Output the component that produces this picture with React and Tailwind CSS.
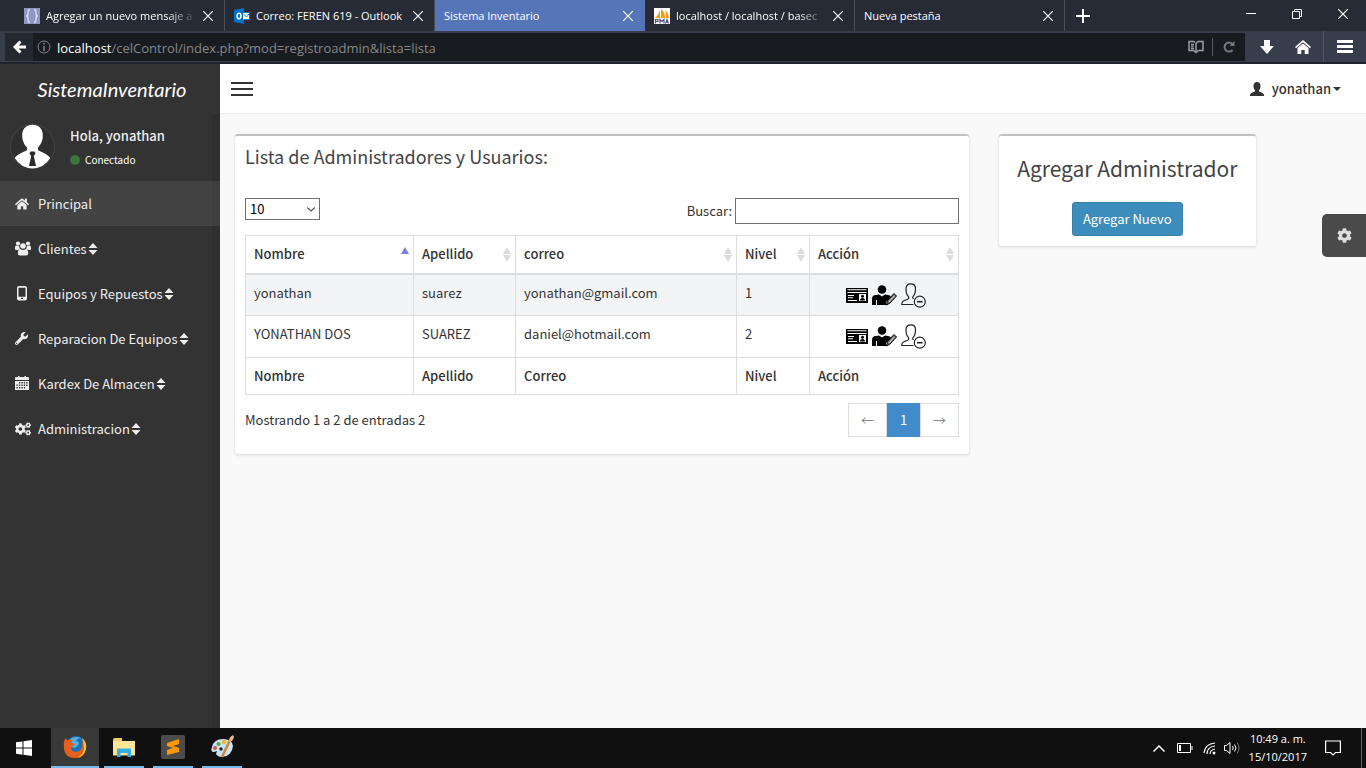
import React, { useState } from "react";
import { FaCogs, FaCog, FaHome, FaWrench } from "react-icons/fa";

const tabs = [
  { title: "Agregar un nuevo mensaje a", icon: "braces", fade: true },
  { title: "Correo: FEREN 619 - Outlook", icon: "outlook" },
  { title: "Sistema Inventario", active: true },
  { title: "localhost / localhost / basec", icon: "pma", fade: true },
  { title: "Nueva pestaña" },
];

const users = [
  { name: "yonathan", last: "suarez", mail: "yonathan@gmail.com", level: 1 },
  { name: "YONATHAN DOS", last: "SUAREZ", mail: "daniel@hotmail.com", level: 2 },
];

const UsersIcon = () => (
  <svg width="16" height="15" viewBox="0 0 16 15" className="fill-current">
    <circle cx="3" cy="2.600" r="2.100" />
    <circle cx="13" cy="2.600" r="2.100" />
    <path d="M0 8V6.500Q0 4.300 1.500 4.500q1.500.9 2.700.3Q4 7 5 7.700 3.800 8 3.300 9H1Q0 9 0 8zM16 8V6.500q0-2.200-1.500-2-1.500.9-2.700.3.200 2.200-.8 2.900 1.200.3 1.700 1.300H15q1 0 1-1z" />
    <circle cx="8" cy="5" r="2.800" />
    <path d="M2.800 12.500q0-4.500 2.500-4.500Q8 9.800 10.700 8q2.500 0 2.500 4.500 0 1.900-2 1.900H4.800q-2 0-2-1.900z" />
  </svg>
);

const PhoneIcon = () => (
  <svg width="14" height="15" viewBox="0 0 14 15" className="fill-current">
    <path
      fillRule="evenodd"
      d="M4 0h6a2 2 0 0 1 2 2v10.500a2 2 0 0 1-2 2H4a2 2 0 0 1-2-2V2a2 2 0 0 1 2-2zM3.500 1.800v8.900h7V1.800zM6 11.800v1.300h2v-1.300z"
    />
  </svg>
);

const CalendarIcon = () => (
  <svg width="14" height="15" viewBox="0 0 14 15" className="fill-current">
    <path d="M1 1h2V0h1.500v1h5V0H11v1h2a1 1 0 0 1 1 1v2H0V2a1 1 0 0 1 1-1z" />
    <path
      fillRule="evenodd"
      d="M0 5h14v8.500a.5.5 0 0 1-.5.5H.5a.5.5 0 0 1-.5-.5zM4 6v1.500h1.300V6zm2.400 0v1.500h1.300V6zm2.400 0v1.500h1.300V6zm2.400 0v1.500h1.300V6zM1.500 8.500V10h1.300V8.500zm2.500 0V10h1.300V8.500zm2.400 0V10h1.300V8.500zm2.400 0V10h1.300V8.500zm2.400 0V10h1.300V8.500zM1.500 11v1.500h1.300V11zM4 11v1.500h1.300V11zm2.400 0v1.500h1.300V11zm2.400 0v1.500h1.300V11z"
    />
  </svg>
);

const menu = [
  { label: "Principal", icon: <FaHome size={14} />, active: true },
  { label: "Clientes", icon: <UsersIcon />, sub: true },
  { label: "Equipos y Repuestos", icon: <PhoneIcon />, sub: true },
  { label: "Reparacion De Equipos", icon: <FaWrench size={13} />, sub: true },
  { label: "Kardex De Almacen", icon: <CalendarIcon />, sub: true },
  { label: "Administracion", icon: <FaCogs size={16} />, sub: true },
];

const Favicon = ({ name }) => {
  if (name === "braces")
    return (
      <svg width="16" height="16" viewBox="0 0 16 16" className="shrink-0">
        <path fill="#8d97c2" d="M0 0h16v16H0z" />
        <path
          fill="none"
          stroke="#dfe3f3"
          strokeWidth="1.300"
          d="M6 2H5Q4 2 4 3.500V6Q4 8 2 8q2 0 2 2v2.500Q4 14 5 14h1M10 2h1q1 0 1 1.500V6q0 2 2 2-2 0-2 2v2.500q0 1.500-1 1.500h-1"
        />
      </svg>
    );
  if (name === "outlook")
    return (
      <svg width="16" height="16" viewBox="0 0 16 16" className="shrink-0">
        <path fill="#0072c6" d="M0 2 10 0v16L0 14z" />
        <path fill="#fff" d="M9 5h6v7H9z" />
        <path fill="none" stroke="#0072c6" d="M9.500 4.500h6v7h-6M9.500 6l3 3 3-3.500" />
        <ellipse cx="5" cy="8" rx="2" ry="2.700" fill="none" stroke="#fff" strokeWidth="1.500" />
      </svg>
    );
  return (
    <svg width="16" height="16" viewBox="0 0 16 16" className="shrink-0">
      <path fill="#fff" d="M0 0h16v16H0z" />
      <path fill="#f89c0e" d="M6 1v9H1Q5 7 6 1zM7 1q4 3 4 9H7zM11 2q4 4 4 8h-3q0-5-1-8z" />
      <path
        fill="none"
        stroke="#53507e"
        strokeWidth="1.200"
        d="M1.500 15.500v-4h2.500v2H2M6 15.500v-4l2 2 2-2v4M11.500 15.500l1.500-4 1.500 4M12 14.200h2"
      />
    </svg>
  );
};

const Cross = () => (
  <svg width="10" height="10" viewBox="0 0 10 10" stroke="currentColor" strokeWidth="1.200">
    <path d="M0 0l10 10M10 0 0 10" />
  </svg>
);

const Browser = () => (
  <header className="shrink-0 text-white font-['Open_Sans',sans-serif]">
    <div className="flex h-[31px] items-stretch bg-[#272b35] pl-[15px]">
      {tabs.map((tab) => (
        <div
          key={tab.title}
          className={`flex w-[210px] min-w-0 items-center gap-1.5 border-r pl-[9px] pr-[11px] ${
            tab.active ? "border-[#5675b9] bg-[#5675b9]" : "border-[#4b4f5a]"
          }`}
        >
          {tab.icon && <Favicon name={tab.icon} />}
          <span
            className={`min-w-0 flex-1 overflow-hidden whitespace-nowrap text-[11px] ${
              tab.fade ? "[mask-image:linear-gradient(to_right,black_80%,transparent)]" : ""
            }`}
          >
            {tab.title}
          </span>
          <button aria-label="Cerrar pestaña">
            <Cross />
          </button>
        </div>
      ))}
      <button aria-label="Abrir pestaña" className="px-[11px]">
        <svg width="14" height="14" viewBox="0 0 14 14" stroke="#fff" strokeWidth="2">
          <path d="M7 0v14M0 7h14" />
        </svg>
      </button>
      <div className="ml-auto flex items-center gap-9 pb-1 pr-[18px]">
        <button aria-label="Minimizar">
          <svg width="10" height="10" viewBox="0 0 10 10" stroke="#fff">
            <path d="M0 4.500h10" />
          </svg>
        </button>
        <button aria-label="Restaurar">
          <svg width="10" height="10" viewBox="0 0 10 10" stroke="#fff" fill="none">
            <path d="M.5 2.500h7v7h-7zM2.500 2.500v-2h7v7h-2" />
          </svg>
        </button>
        <button aria-label="Cerrar">
          <Cross />
        </button>
      </div>
    </div>
    <div className="flex h-[33px] items-center border-b-2 border-[#20242e] bg-[#383d4b] pl-[5px]">
      <div className="flex h-7 flex-1 items-center bg-[#181b1f]">
        <button aria-label="Atrás" className="flex h-7 w-7 items-center justify-center bg-[#242830]">
          <svg width="13" height="14" viewBox="0 0 13 14" fill="none" stroke="#fff" strokeWidth="3">
            <path d="M7.500 1.500 2 7l5.500 5.500M2 7h11" />
          </svg>
        </button>
        <svg width="14" height="14" viewBox="0 0 14 14" fill="none" stroke="#85888c" className="ml-1">
          <circle cx="7" cy="7" r="6" />
          <path d="M7 3v1.500M7 6v5" strokeWidth="1.500" />
        </svg>
        <span className="ml-1.5 flex-1 whitespace-nowrap pt-0.5 text-[13px] text-[#85888c]">
          <span className="text-white">localhost</span>
          /celControl/index.php?mod=registroadmin&amp;lista=lista
        </span>
        <button aria-label="Vista de lectura" className="border-r border-[#55585d] py-0.5 pr-2">
          <svg width="16" height="14" viewBox="0 0 16 14" fill="none" stroke="#9a9c9f" strokeWidth="1.500">
            <path d="M7 2.500 6 1.500H1v9h4.500L8 12.500l2.500-2H15v-9h-5l-2 2V12M3 4.500h3M3 6.500h2.500M3 8.500h3" />
          </svg>
        </button>
        <button aria-label="Recargar" className="px-2.5">
          <svg width="12" height="12" viewBox="0 0 12 12" fill="none" stroke="#77797d" strokeWidth="2">
            <path d="M9.500 9A4.500 4.500 0 1 1 9.300 3" />
            <path d="M11.500 0v5h-5z" fill="#77797d" stroke="none" />
          </svg>
        </button>
      </div>
      <button aria-label="Descargas" className="px-[15px]">
        <svg width="14" height="14" viewBox="0 0 14 14" fill="#fff">
          <path d="M4 0h6v6h4l-7 8-7-8h4z" />
        </svg>
      </button>
      <button aria-label="Inicio" className="mr-3 pl-1.5">
        <svg width="16" height="14" viewBox="0 0 16 14" fill="#fff">
          <path d="M8 0l8 7-1 1.200L8 2.300 1 8.200 0 7z" />
          <path d="M8 3.500l5.500 4.600V14H9.700v-4H6.300v4H2.500V8.100z" />
        </svg>
      </button>
      <button aria-label="Menú" className="flex h-[31px] items-center border-l border-[#555966] px-[13px]">
        <svg width="16" height="13" viewBox="0 0 16 13" stroke="#fff" strokeWidth="3">
          <path d="M0 1.500h16M0 6.500h16M0 11.500h16" />
        </svg>
      </button>
    </div>
  </header>
);

const Avatar = () => (
  <svg width="45" height="45" viewBox="0 0 45 45" className="shrink-0">
    <circle cx="22.500" cy="22.500" r="22" fill="#2f2f2f" stroke="#444" />
    <path
      fill="#fff"
      d="M22.500.8c6 0 10.300 4 10.300 10.500 0 6.500-2.500 9.500-4.800 12.400v2.200c4 2.700 9 3.300 12.300 8.200A22 22 0 0 1 22.500 44.500 22 22 0 0 1 4.700 34.100C8 29.200 13 28.600 17 25.900v-2.200c-2.300-2.900-4.800-5.900-4.800-12.400C12.200 4.800 16.500.8 22.500.8z"
    />
    <path fill="#2b2b2b" d="M20.500 27.500h4l1 2-1.700 2.500L26 42h-7l2.200-10-1.700-2.500z" />
  </svg>
);

const Sidebar = () => (
  <aside className="flex w-[220px] shrink-0 flex-col bg-[#333] text-[13px] text-[#eee]">
    <a
      href="#inicio"
      className="flex h-[50px] items-center justify-center pl-1 font-['Lato',cursive] text-[20px] italic text-white"
    >
      SistemaInventario
    </a>
    <div className="flex-1 shadow-[inset_-8px_0_0_#2f2f2f]">
      <div className="flex h-[67px] gap-[15px] p-2.5">
        <Avatar />
        <div className="pt-0.5">
          <p className="font-medium leading-5">Hola, yonathan</p>
          <p className="mt-1 flex items-center gap-[5px] text-[10px] leading-5 text-white">
            <span className="h-2.5 w-2.5 rounded-full bg-[#3c763d]" />
            Conectado
          </p>
        </div>
      </div>
      <nav>
        {menu.map((item) => (
          <a
            key={item.label}
            href="#menu"
            className={`flex h-[45px] items-center pl-[15px] ${item.active ? "bg-white/8" : ""}`}
          >
            <span className="w-[23px]">{item.icon}</span>
            {item.label}
            {item.sub && (
              <svg width="10" height="12" viewBox="0 0 10 12" className="ml-px fill-current">
                <path d="M.5 5 5 0l4.500 5zM.5 7h9L5 12z" />
              </svg>
            )}
          </a>
        ))}
      </nav>
    </div>
  </aside>
);

const SortArrows = ({ sorted }) => (
  <svg width="8" height="15" viewBox="0 0 8 15" className="shrink-0">
    <path d="M0 7l4-7 4 7z" fill={sorted ? "#7a80dd" : "#dcdcdc"} />
    {!sorted && <path d="M0 8h8l-4 7z" fill="#dcdcdc" />}
  </svg>
);

const HeadCell = ({ width, sorted, children }) => (
  <th className={`border border-b-2 border-[#ddd] pl-2 pr-1 font-medium ${width}`}>
    <div className="flex items-center justify-between">
      {children} <SortArrows sorted={sorted} />
    </div>
  </th>
);

const Actions = () => (
  <div className="flex items-center justify-center gap-1 pl-1">
    <button aria-label="Ver">
      <svg width="22" height="15" viewBox="0 0 22 15">
        <path d="M0 0h22v15H0z" />
        <path fill="#fff" d="M1.500 1.300h19v1h-19zM1.500 4h19v1h-19zM2 7h6v1H2zM2 9.300h5v1H2zM2 12h9v1H2zM13 6h7v7h-7z" />
        <circle cx="16.500" cy="8.300" r="1.500" />
        <path d="M14 12.500q0-2.500 2.500-2.500t2.500 2.500z" />
      </svg>
    </button>
    <button aria-label="Editar">
      <svg width="25" height="21" viewBox="0 0 25 21">
        <circle cx="10" cy="4.500" r="4.300" />
        <path d="M0 20v-6q0-4 4-4l3-.5 3 2 3-2 3 .5q2 0 3 1.500L14 17v3H5v-5H4v5z" />
        <path fill="#777" stroke="#000" d="M14.500 20l1-4.500 6.500-7 2.500 2.500-6.500 7z" />
        <path stroke="#fff" strokeWidth=".8" d="M17 17l5.500-6" />
      </svg>
    </button>
    <button aria-label="Eliminar">
      <svg width="25" height="25" viewBox="0 0 25 25" fill="none" stroke="#222" strokeWidth="1.200">
        <path d="M12.500 21.500H.8c0-4 2.500-3.800 6-5.300 1.300-.6 1.200-2 .3-3C5 11 5 8.500 5 5.500 5 2.500 7 .8 9.700.8s4.800 1.700 4.800 4.700c0 3 0 5.500-2.200 7.700-.8.900-.8 2 .3 2.600" />
        <circle cx="18.800" cy="18.700" r="5.500" />
        <path d="M16 18.700h5.600" strokeWidth="1.600" />
      </svg>
    </button>
  </div>
);

const UserList = () => {
  const [search, setSearch] = useState("");
  const cell = "border border-[#ddd] px-2 pt-2 align-top";
  const rows = users.filter((u) =>
    Object.values(u).join(" ").toLowerCase().includes(search.toLowerCase())
  );

  return (
    <section className="rounded-[3px] border-t-2 border-[#c1c1c1] bg-white px-2.5 pb-[17px] shadow-[0_1px_3px_rgba(0,0,0,0.15)]">
      <h3 className="pt-1.5 text-[18px] leading-7 text-[#444]">
        Lista de Administradores y Usuarios:
      </h3>
      <div className="mt-7 flex items-start justify-between">
        <div className="relative">
          <select
            aria-label="Entradas"
            className="h-[22px] w-[75px] appearance-none border border-[#707070] bg-white pl-1 leading-5 text-black"
          >
            <option>10</option>
            <option>25</option>
          </select>
          <svg
            width="8"
            height="5"
            viewBox="0 0 8 5"
            fill="none"
            stroke="#555"
            strokeWidth="1.300"
            className="pointer-events-none absolute right-[5px] top-[9px]"
          >
            <path d="M0 .5l4 3.500 4-3.500" />
          </svg>
        </div>
        <label className="flex items-center gap-[3px]">
          Buscar:
          <input
            className="h-[26px] w-56 border border-[#707070] px-1"
            value={search}
            onChange={(e) => setSearch(e.target.value)}
          />
        </label>
      </div>

      <table className="mt-[11px] w-full table-fixed border-collapse text-left">
        <thead>
          <tr className="h-[38px]">
            <HeadCell width="w-[168px]" sorted>
              Nombre
            </HeadCell>
            <HeadCell width="w-[102px]">Apellido</HeadCell>
            <HeadCell>correo</HeadCell>
            <HeadCell width="w-[73px]">Nivel</HeadCell>
            <HeadCell width="w-[149px]">Acción</HeadCell>
          </tr>
        </thead>
        <tbody>
          {rows.map((user) => (
            <tr key={user.name} className="h-[42px] odd:bg-[#f3f4f5]">
              <td className={cell}>{user.name}</td>
              <td className={cell}>{user.last}</td>
              <td className={cell}>{user.mail}</td>
              <td className={cell}>{user.level}</td>
              <td className={cell}>
                <Actions />
              </td>
            </tr>
          ))}
        </tbody>
        <tfoot>
          <tr className="h-[37px]">
            {["Nombre", "Apellido", "Correo", "Nivel", "Acción"].map((name) => (
              <th key={name} className="border border-[#ddd] px-2 font-medium">
                {name}
              </th>
            ))}
          </tr>
        </tfoot>
      </table>

      <div className="mt-2 flex items-center justify-between">
        <p>Mostrando 1 a 2 de entradas 2</p>
        <div className="flex h-[34px] items-stretch">
          <button aria-label="Anterior" className="w-[39px] border border-[#ddd] text-[#888]">
            ←
          </button>
          <button className="w-[33px] bg-[#428bca] text-white">1</button>
          <button aria-label="Siguiente" className="w-[39px] border border-[#ddd] text-[#888]">
            →
          </button>
        </div>
      </div>
    </section>
  );
};

const TaskButton = ({ label, active, children }) => (
  <button
    aria-label={label}
    className={`flex items-center justify-center border-b-2 border-[#76b9ed] ${
      active ? "w-12 bg-[#383838]" : "w-10"
    }`}
  >
    {children}
  </button>
);

const Taskbar = () => (
  <footer className="flex h-10 shrink-0 items-stretch bg-[#101010] font-['Open_Sans',sans-serif] text-white">
    <button aria-label="Inicio" className="pl-4 pr-[19px]">
      <svg width="16" height="16" viewBox="0 0 16 16" fill="#fff">
        <path d="M0 2.300 6.500 1.400v6.200H0zM7.500 1.200 16 0v7.600H7.500zM0 8.500h6.500v6.200L0 13.800zM7.500 8.500H16V16l-8.500-1.200z" />
      </svg>
    </button>
    <div className="flex flex-1 gap-[9px]">
      <div className="-mr-1 flex">
        <TaskButton label="Firefox" active>
          <svg width="24" height="24" viewBox="0 0 24 24">
            <circle cx="13" cy="11" r="10" fill="#1f6fb4" />
            <path fill="#4cb5e6" d="M6 5q5-5 12-2-4 0-5 3 3 0 3 3l-4 4-6-2z" />
            <path
              fill="#e5601c"
              d="M2 3q1 2 3 2 2-1 5 0-2 2-1 3l3 1q-2 3-4 3 0 5 5 5 5-1 6-5l1-8q4 4 3 10-2 9-11 9Q2 23 1 14 0 8 2 3z"
            />
            <path fill="#fdc32f" d="M19 3q5 4 4 11-2 8-9 9 6-3 7-9 0-6-2-11z" />
          </svg>
        </TaskButton>
      </div>
      <TaskButton label="Explorador">
        <svg width="22" height="19" viewBox="0 0 22 19">
          <path fill="#f5cf63" d="M0 2Q0 0 2 0h7v3h12v3H0z" />
          <path fill="#fde595" d="M0 3h22v14.500H0z" />
          <path fill="#36b0e4" d="M4 19v-8.500h14V19h-3.500v-4h-7v4z" />
        </svg>
      </TaskButton>
      <TaskButton label="Sublime Text">
        <svg width="24" height="24" viewBox="0 0 24 24">
          <rect width="24" height="24" rx="2" fill="#4b4b4b" />
          <path fill="#ff9800" d="M6 8l12-4v5l-6 2 6 2v4L6 20v-5l6-2-6-2z" />
        </svg>
      </TaskButton>
      <TaskButton label="Paint">
        <svg width="25" height="24" viewBox="0 0 25 24">
          <path fill="#c7e4f5" d="M2 12Q4 4 13 4q9 0 10 7-1 10-11 11-4 0-6-3l1-3-3 1q-4 0-2-5z" />
          <circle cx="5" cy="13" r="2" fill="#e0523f" />
          <circle cx="8.500" cy="9" r="2" fill="#56ad48" />
          <circle cx="14" cy="7" r="2.300" fill="#f5b82e" />
          <circle cx="11" cy="14" r="1.700" fill="#222" />
          <path stroke="#d98032" strokeWidth="2.500" d="M12 22 20 5" />
          <path fill="#e5bd88" d="M19 6q0-4 4-6l1 2q-1 4-4 5z" />
        </svg>
      </TaskButton>
    </div>
    <div className="flex items-center gap-2 pr-1">
      <svg width="12" height="7" viewBox="0 0 12 7" fill="none" stroke="#fff" strokeWidth="1.500" className="mr-1">
        <path d="M.5 6.500 6 1l5.500 5.500" />
      </svg>
      <svg width="16" height="10" viewBox="0 0 16 10" fill="none" stroke="#fff" className="mr-0.5">
        <path d="M.5.5h13v9H.5zM15 3v4" />
        <path d="M2 2h2v6H2z" fill="#fff" stroke="none" />
      </svg>
      <svg width="13" height="13" viewBox="0 0 13 13" fill="none" stroke="#fff" strokeWidth="1.200">
        <path d="M1 11Q2 2 12 1M4 12q0-7 8-8M7 12q0-4 5-5" />
        <circle cx="11" cy="11" r="1.500" fill="#fff" stroke="none" />
      </svg>
      <svg width="17" height="14" viewBox="0 0 17 14" fill="none" stroke="#fff">
        <path d="M.5 4.500h2L6 1.500v11l-3.500-3h-2zM8.500 5q1.500 2 0 4M10.500 3.500q3 3.500 0 7" />
        <path d="M13 1.500q4 5.500 0 11" stroke="#777" />
      </svg>
      <div className="text-center text-[11px] leading-[18px]">
        <p>10:49 a. m.</p>
        <p>15/10/2017</p>
      </div>
      <button aria-label="Notificaciones" className="ml-2.5 border-r border-[#666] py-3 pr-5">
        <svg width="16" height="16" viewBox="0 0 16 16" fill="none" stroke="#fff" strokeWidth="1.200">
          <path d="M.6 1h14.800v11.500H10.500L8 15l-2.500-2.500H.6z" />
        </svg>
      </button>
    </div>
  </footer>
);

const App = () => {
  return (
    <div className="flex min-h-screen flex-col bg-[#f9f9f9] font-['Noto_Sans_CJK_SC',sans-serif] text-[13px] leading-5 text-[#333]">
      <Browser />
      <div className="relative flex flex-1">
        <Sidebar />
        <main className="min-w-0 flex-1">
          <div className="flex h-[50px] items-center justify-between border-b border-[#eee] bg-white pl-[11px] pr-[25px]">
            <button aria-label="Menú lateral">
              <svg width="22" height="14" viewBox="0 0 22 14" stroke="#333" strokeWidth="2">
                <path d="M0 1h22M0 7h22M0 13h22" />
              </svg>
            </button>
            <button className="flex items-center gap-2 font-medium">
              <svg width="14" height="14" viewBox="0 0 14 14" fill="#333">
                <path d="M7 0c2.200 0 3.500 1.500 3.500 4 0 2-.6 3.300-1.500 4.300v1.200c1.500.9 5 1.200 5 3.700v.8H0v-.8c0-2.500 3.500-2.800 5-3.700V8.300C4.100 7.300 3.500 6 3.500 4c0-2.500 1.300-4 3.500-4z" />
              </svg>
              <span className="flex items-center gap-0.5">
                yonathan
                <svg width="8" height="4" viewBox="0 0 8 4" fill="#333">
                  <path d="M0 0h8L4 4z" />
                </svg>
              </span>
            </button>
          </div>
          <div className="grid grid-cols-12 items-start pt-5">
            <div className="col-span-8 px-[15px]">
              <UserList />
            </div>
            <div className="col-span-3 px-[15px]">
              <section className="rounded-[3px] border-t-2 border-[#c1c1c1] bg-white px-2.5 pb-2.5 pt-4 text-center shadow-[0_1px_3px_rgba(0,0,0,0.15)]">
                <h2 className="whitespace-nowrap text-[21px] leading-8 text-[#444]">
                  Agregar Administrador
                </h2>
                <button className="mt-[18px] h-[34px] rounded-[3px] border border-[#367fa9] bg-[#3c8dbc] px-2.5 text-white">
                  Agregar Nuevo
                </button>
              </section>
            </div>
          </div>
        </main>
        <button
          aria-label="Configuración"
          className="absolute right-0 top-[150px] flex h-[43px] w-11 items-center justify-center rounded-l-[5px] bg-[#4a4a4a] text-[#ddd]"
        >
          <FaCog size={15} />
        </button>
      </div>
      <Taskbar />
    </div>
  );
};

export default App;
